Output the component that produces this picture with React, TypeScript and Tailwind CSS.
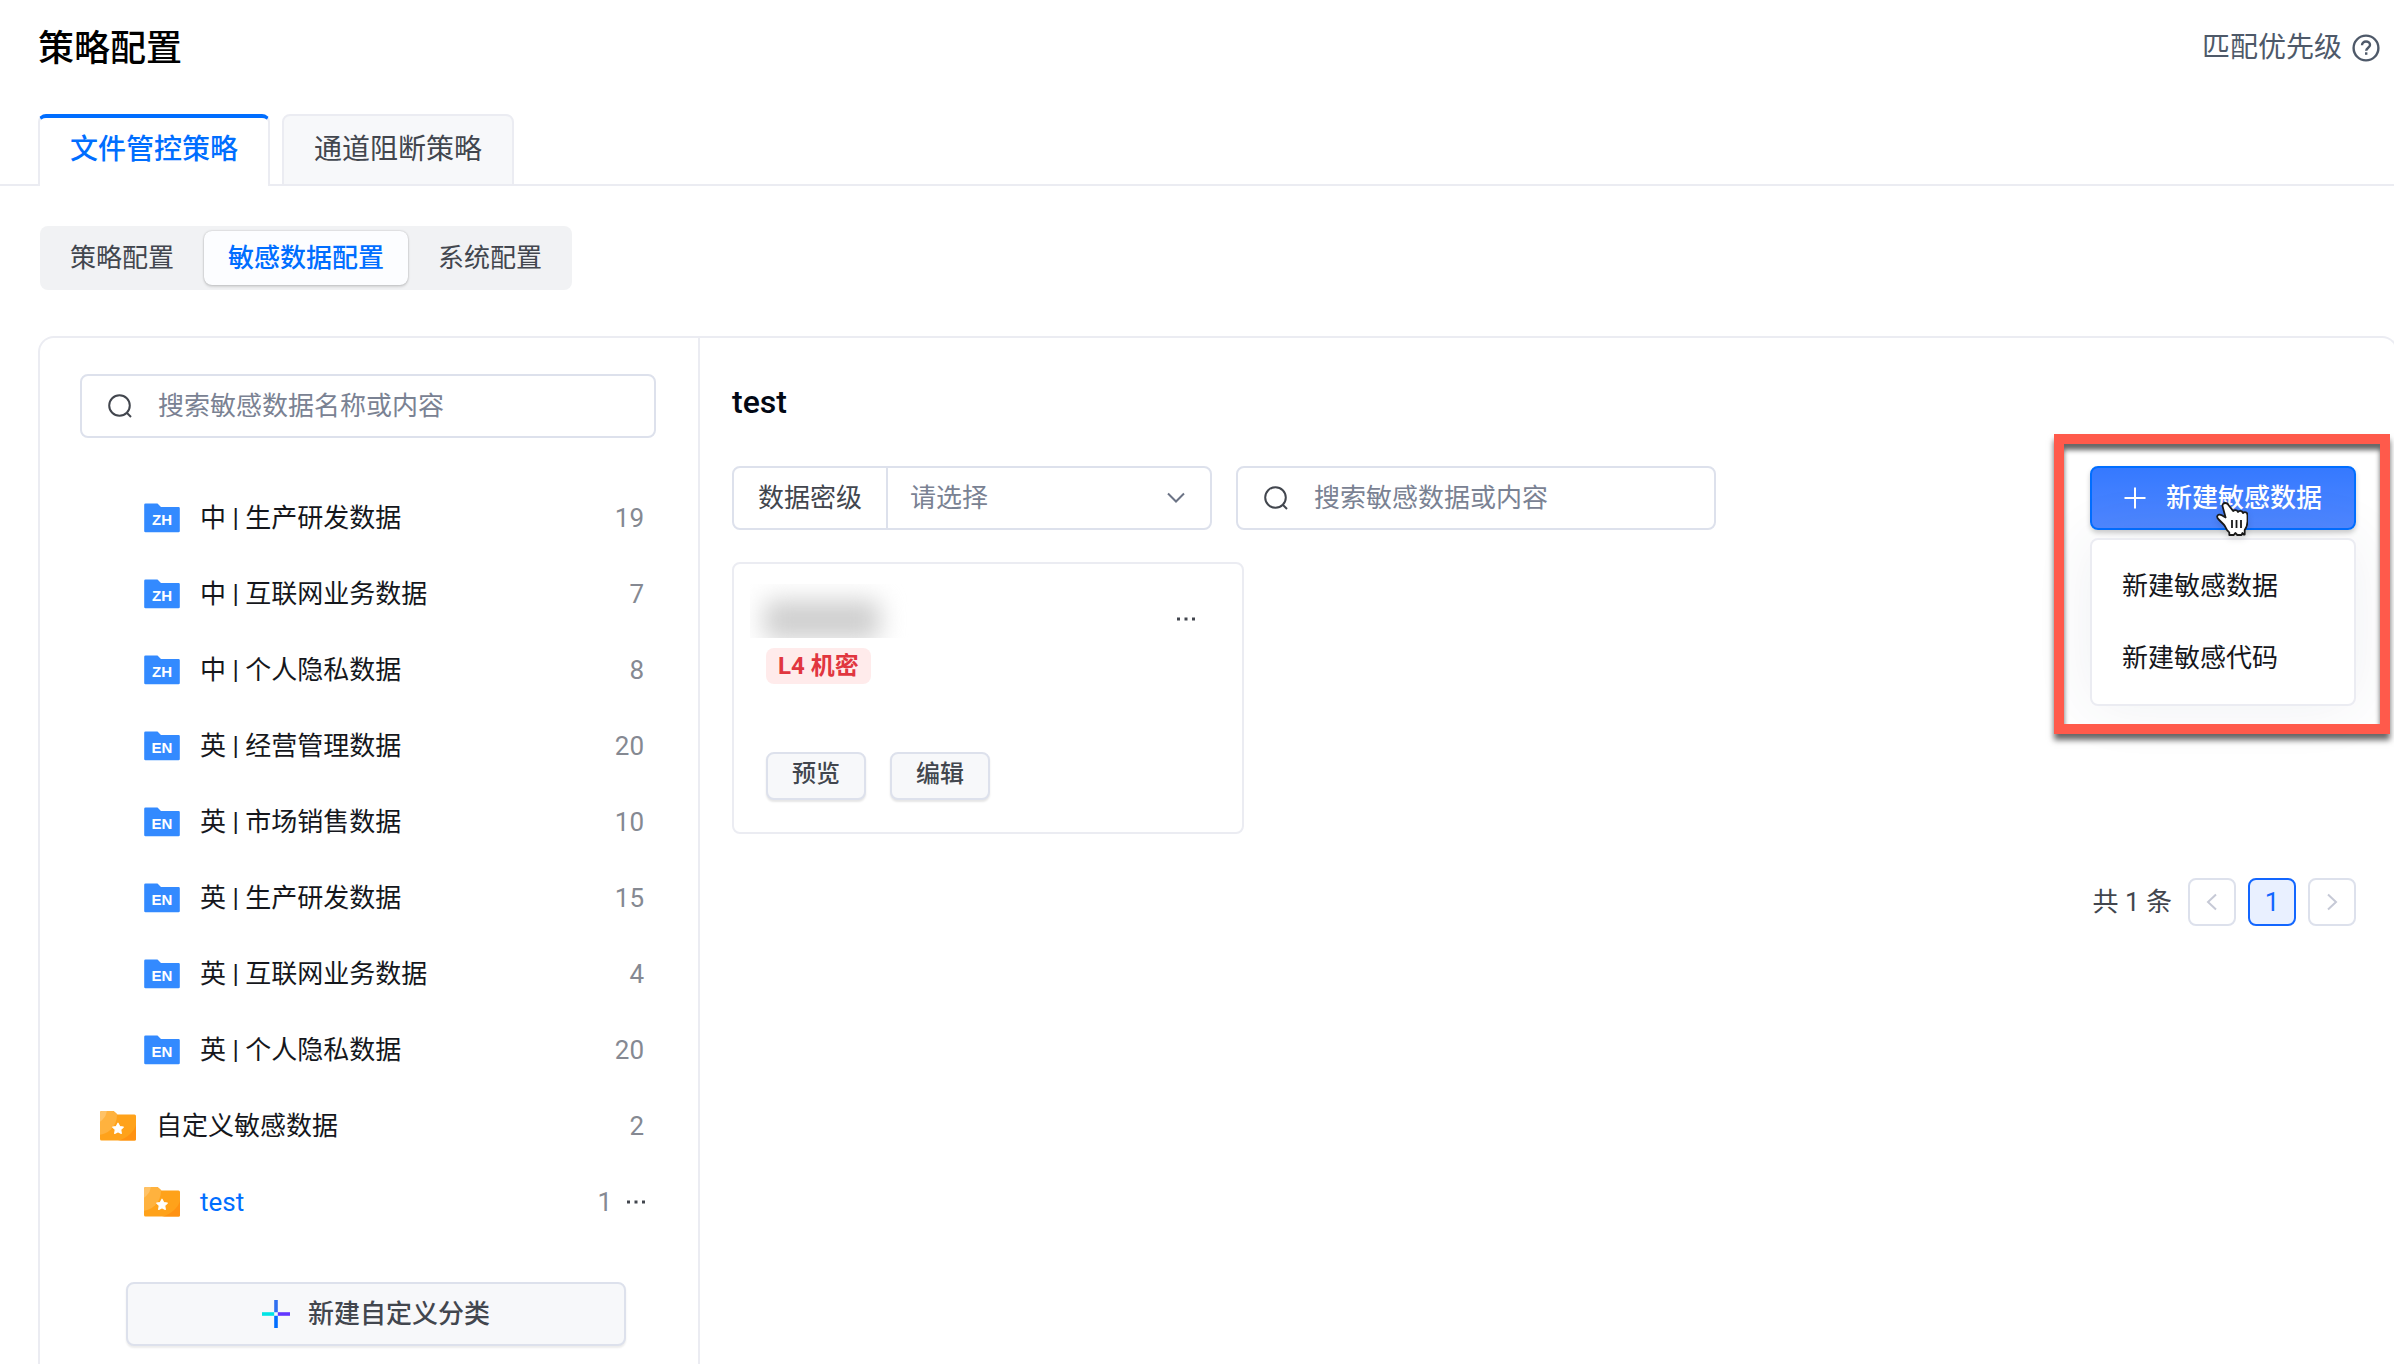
import { useState } from "react";

type Category = { lang: "ZH" | "EN"; name: string; count: number };

const categories: Category[] = [
  { lang: "ZH", name: "中 | 生产研发数据", count: 19 },
  { lang: "ZH", name: "中 | 互联网业务数据", count: 7 },
  { lang: "ZH", name: "中 | 个人隐私数据", count: 8 },
  { lang: "EN", name: "英 | 经营管理数据", count: 20 },
  { lang: "EN", name: "英 | 市场销售数据", count: 10 },
  { lang: "EN", name: "英 | 生产研发数据", count: 15 },
  { lang: "EN", name: "英 | 互联网业务数据", count: 4 },
  { lang: "EN", name: "英 | 个人隐私数据", count: 20 },
];

function LangFolder({ lang }: { lang: string }) {
  return (
    <span className="grid h-[30px] w-9 shrink-0 place-items-center">
      <svg viewBox="0 0 36 30" className="col-start-1 row-start-1 h-[30px] w-9" aria-hidden="true">
        <path d="M1.500 0.500h12l3.500 3.500h17.500a1.300 1.300 0 0 1 1.300 1.300v22.700a1.300 1.300 0 0 1-1.300 1.300H1.500a1.300 1.300 0 0 1-1.300-1.300V1.800A1.300 1.300 0 0 1 1.500 0.500z" fill="#338aff" />
      </svg>
      <span className="col-start-1 row-start-1 pt-1 font-['Liberation_Sans'] text-[15px] leading-4 font-bold text-white">{lang}</span>
    </span>
  );
}

function StarFolder() {
  return (
    <svg viewBox="0 0 36 30" className="h-[30px] w-9 shrink-0" aria-hidden="true">
      <defs>
        <clipPath id="folder-shape">
          <path d="M2 0h11.5l4 3.500H34.500a1.500 1.500 0 0 1 1.500 1.500V28a1.500 1.500 0 0 1-1.500 1.500H1.500a1.500 1.500 0 0 1-1.500-1.500V2a2 2 0 0 1 2-2z" />
        </clipPath>
      </defs>
      <g clipPath="url(#folder-shape)">
        <rect width="36" height="30" fill="#ffa21a" />
        <path d="M36 14c-2 7-9 13-18 16h18z" fill="#ff9212" />
        <circle cx="-3" cy="4" r="20" fill="#ffb23e" />
        <circle cx="-8" cy="-2" r="15" fill="#ffc266" />
      </g>
      <path d="M18 12.200l1.700 3.300 3.600.6-2.600 2.600.6 3.700-3.300-1.700-3.300 1.700.6-3.700-2.600-2.600 3.600-.6z" fill="#fff" stroke="#fff" strokeWidth="1.200" strokeLinejoin="round" />
    </svg>
  );
}

function SearchIcon() {
  return (
    <svg viewBox="0 0 24 24" className="size-6 shrink-0" fill="none" stroke="#42464e" strokeWidth="2" aria-hidden="true">
      <circle cx="11.500" cy="11.500" r="10.300" />
      <path d="M19 19l4 4" />
    </svg>
  );
}

function Dots() {
  return (
    <svg viewBox="0 0 20 4" className="h-1 w-5" fill="#42464e" aria-hidden="true">
      <rect x="1" y="0.500" width="3" height="3" />
      <rect x="8.500" y="0.500" width="3" height="3" />
      <rect x="16" y="0.500" width="3" height="3" />
    </svg>
  );
}

function SearchBox({ label, className }: { label: string; className: string }) {
  return (
    <label className={"flex h-16 items-center gap-[26px] rounded-lg border-2 border-[#dde1ec] bg-white pl-[26px] pr-6 " + className}>
      <SearchIcon />
      <input
        type="text"
        aria-label={label}
        placeholder={label}
        className="w-full min-w-0 text-[26px] leading-9 outline-none placeholder:text-[#7a8293]"
      />
    </label>
  );
}

function HandCursor() {
  return (
    <svg viewBox="0 0 32 36" className="pointer-events-none absolute left-[126px] top-9 h-9 w-8 drop-shadow-md" aria-hidden="true">
      <path
        d="M9.300 1c-2 0-3.200 1.600-2.700 3.500l3 11-3.800-2.300c-1.900-1.100-4-.7-4.500.8-.4 1.300.2 2.400 1.400 3.500l5 5c1.500 1.500 2.300 4.300 3.600 5.800l2 2.200V33h4.500l1.500-2 2 2h4.200l1-2 1 1.500h1.200v-4.500c2-3 2.800-5.500 2.800-8.500v-6c0-2-.9-3.300-2.500-3.300-.9 0-1.500.3-2 .9-.4-1.400-1.400-2.200-2.800-2.200-1 0-1.700.4-2.200 1.100-.5-1.200-1.400-1.800-2.700-1.800-.9 0-1.600.3-2 .9L12.600 3.300C12.100 1.800 10.900 1 9.300 1z"
        fill="#fff"
        stroke="#1a1a1a"
        strokeWidth="1.800"
        strokeLinejoin="round"
      />
      <path d="M16 18v8M20.500 18v8M25 18v8" stroke="#1a1a1a" strokeWidth="1.800" />
    </svg>
  );
}

export default function App() {
  const [level, setLevel] = useState("");
  return (
    <div className="flex min-h-screen flex-col overflow-hidden bg-white font-['Roboto','Noto_Sans_CJK_SC',sans-serif] text-[26px] leading-9 text-[#15171c]">
      <header className="flex h-24 items-center justify-between pl-[38px] pr-3.5">
        <h1 className="pt-0.5 text-[36px] leading-12 font-medium text-black">策略配置</h1>
        <a href="#priority" className="flex items-center gap-2.5 text-[28px] leading-10 text-[#4e5969]">
          匹配优先级
          <svg viewBox="0 0 28 28" className="size-7" fill="none" stroke="#4e5969" strokeWidth="2.400" aria-hidden="true">
            <circle cx="14" cy="14" r="12.400" />
            <path d="M10 11.300c0-2.200 1.700-3.800 4-3.800s4 1.500 4 3.500c0 2.600-3.800 2.900-3.800 5.800" />
            <path d="M14.200 18.300v2.500" />
          </svg>
        </a>
      </header>

      <nav className="mt-[18px] flex h-[72px] gap-3 pl-[38px] text-[28px] leading-10 shadow-[inset_0_-2px_0_#ebecf2]">
        <button className="rounded-t-lg border-x-2 border-t-4 border-x-[#ebecf2] border-t-[#006eff] bg-white px-[30px] pb-1 font-medium text-[#006eff]">
          文件管控策略
        </button>
        <button className="rounded-t-lg border-2 border-[#ebecf2] bg-[#f7f8fa] px-[30px] text-[#42464e]">通道阻断策略</button>
      </nav>

      <div className="mt-10 ml-10 flex h-16 w-fit items-center gap-1.5 rounded-lg bg-[#f1f2f4] px-1.5 text-[#42464e]">
        <button className="h-[54px] px-6">策略配置</button>
        <button className="h-[54px] rounded-lg bg-[#fcfdff] px-6 font-medium text-[#006eff] shadow-[0_0_2px_rgba(0,0,0,0.25),0_2px_3px_rgba(0,0,0,0.12)]">
          敏感数据配置
        </button>
        <button className="h-[54px] px-6">系统配置</button>
      </div>

      <main className="mt-[46px] -mr-1 ml-[38px] flex flex-1 rounded-t-2xl border-2 border-b-0 border-[#ebecf2]">
        <aside className="w-[660px] shrink-0 border-r-2 border-[#ebecf2] pt-9 pl-10 pr-[42px]">
          <SearchBox label="搜索敏感数据名称或内容" className="w-full" />
          <ul className="mt-[42px]">
            {categories.map((c) => (
              <li key={c.name} className="flex h-[76px] items-center pl-16 pr-3">
                <LangFolder lang={c.lang} />
                <span className="ml-5 flex-1">{c.name}</span>
                <span className="text-[#858992]">{c.count}</span>
              </li>
            ))}
            <li className="flex h-[76px] items-center pl-5 pr-3">
              <StarFolder />
              <span className="ml-5 flex-1">自定义敏感数据</span>
              <span className="text-[#858992]">2</span>
            </li>
            <li className="flex h-[76px] items-center pl-16 pr-2.5">
              <StarFolder />
              <a href="#test" className="ml-5 flex-1 text-[#006eff]">test</a>
              <span className="text-[#858992]">1</span>
              <button aria-label="更多" className="ml-3.5">
                <Dots />
              </button>
            </li>
          </ul>
          <button className="mt-[42px] ml-[46px] flex h-16 w-[500px] items-center justify-center gap-[18px] rounded-lg border-2 border-[#dde1ec] bg-[#f7f8fa] font-medium text-[#42464e] shadow-[0_2px_2px_rgba(0,0,0,0.08)]">
            <svg viewBox="0 0 28 28" className="size-7" aria-hidden="true">
              <path d="M12.200 0h3.600v12.200h-3.600z" fill="#3070f0" />
              <path d="M12.200 15.800h3.600V28h-3.600z" fill="#006eff" />
              <path d="M0 12.200h12.200v3.600H0z" fill="#00e4e5" />
              <path d="M15.800 12.200H28v3.600H15.800z" fill="#6236ff" />
            </svg>
            新建自定义分类
          </button>
        </aside>

        <section className="flex-1 pt-10 pl-8 pr-10">
          <h2 className="text-[32px] leading-12 font-medium text-[#020814]">test</h2>

          <div className="mt-10 flex items-start">
            <label className="relative flex h-16 w-[480px] items-center rounded-lg border-2 border-[#dde1ec]">
              <span className="flex h-full items-center border-r-2 border-[#dde1ec] px-6 text-[#42464e]">数据密级</span>
              <select
                value={level}
                onChange={(e) => setLevel(e.target.value)}
                className="h-full flex-1 appearance-none pl-[22px] text-[#7a8293] outline-none"
              >
                <option value="">请选择</option>
                <option value="L4">L4 机密</option>
              </select>
              <svg viewBox="0 0 20 12" className="pointer-events-none absolute right-6 h-3 w-5" fill="none" stroke="#6b7385" strokeWidth="2" aria-hidden="true">
                <path d="M2 1.500l8 8 8-8" />
              </svg>
            </label>
            <SearchBox label="搜索敏感数据或内容" className="ml-6 w-[480px]" />

            <div className="relative ml-auto w-[266px]">
              <button className="flex h-16 w-full items-center justify-center gap-5 rounded-lg border-2 border-[#006eff] bg-linear-to-b from-[#3579ff] to-[#4f87ff] font-medium text-white shadow-[0_3px_5px_rgba(0,0,0,0.2)]">
                <svg viewBox="0 0 22 22" className="size-[22px]" stroke="#fff" strokeWidth="2" aria-hidden="true">
                  <path d="M11 0.500v21M0.500 11h21" />
                </svg>
                新建敏感数据
              </button>
              <div role="menu" className="absolute left-0 top-[72px] flex h-42 w-full flex-col rounded-lg border-2 border-[#ebecf2] bg-white py-2.5 shadow-[0_0_60px_rgba(55,70,100,0.08)]">
                <button role="menuitem" className="flex-1 px-[30px] text-left">新建敏感数据</button>
                <button role="menuitem" className="flex-1 px-[30px] text-left">新建敏感代码</button>
              </div>
              <HandCursor />
              <div className="pointer-events-none absolute -left-9 -top-8 h-[300px] w-[336px] border-10 border-[#ff5a4b] shadow-[0_6px_6px_rgba(0,0,0,0.6),inset_0_6px_5px_rgba(0,0,0,0.6)]" />
            </div>
          </div>

          <article className="mt-8 h-[272px] w-[512px] rounded-lg border-2 border-[#ebecf2] pt-5 pl-4 pr-[46px]">
            <div className="flex items-center justify-between">
              <div className="h-[54px] w-40 overflow-hidden pt-4 pl-3.5">
                <div className="h-10 w-[116px] rounded-lg bg-[#cfcfcf] blur-md" />
              </div>
              <button aria-label="更多" className="pt-4">
                <Dots />
              </button>
            </div>
            <div className="ml-4 mt-2.5 flex h-9 w-fit items-center rounded-lg bg-[#ffebeb] px-3 text-[24px] leading-8 font-bold text-[#e1363f]">
              L4 机密
            </div>
            <div className="mt-[68px] ml-4 flex gap-6 text-[24px] leading-8 font-medium text-[#42464e]">
              <button className="h-12 rounded-lg border-2 border-[#dde1ec] bg-[#f7f8fa] px-6 pb-1 shadow-[0_2px_2px_rgba(0,0,0,0.1)]">预览</button>
              <button className="h-12 rounded-lg border-2 border-[#dde1ec] bg-[#f7f8fa] px-6 pb-1 shadow-[0_2px_2px_rgba(0,0,0,0.1)]">编辑</button>
            </div>
          </article>

          <div className="mt-11 flex items-center justify-end gap-3">
            <span className="mr-1 text-[#42464e]">共 1 条</span>
            <button aria-label="上一页" className="grid size-12 place-items-center rounded-lg border-2 border-[#dde1ec]">
              <svg viewBox="0 0 12 18" className="h-[18px] w-3" fill="none" stroke="#c6c9d6" strokeWidth="2" aria-hidden="true">
                <path d="M10 1.500L2 9l8 7.500" />
              </svg>
            </button>
            <button className="grid size-12 place-items-center rounded-lg border-2 border-[#1266ff] bg-[#e9f0ff] text-[#1266ff]">1</button>
            <button aria-label="下一页" className="grid size-12 place-items-center rounded-lg border-2 border-[#dde1ec]">
              <svg viewBox="0 0 12 18" className="h-[18px] w-3" fill="none" stroke="#c6c9d6" strokeWidth="2" aria-hidden="true">
                <path d="M2 1.500L10 9l-8 7.500" />
              </svg>
            </button>
          </div>
        </section>
      </main>
    </div>
  );
}
